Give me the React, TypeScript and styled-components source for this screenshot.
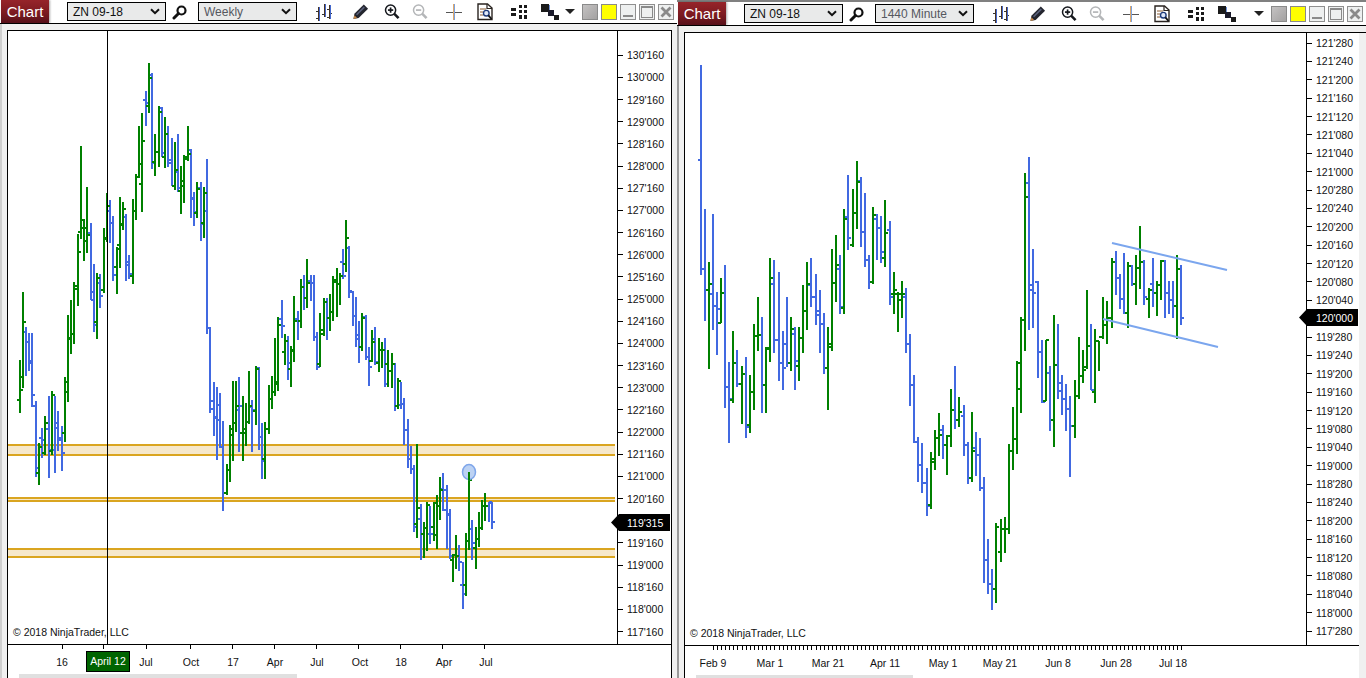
import styled, { createGlobalStyle } from 'styled-components';

// x, top, bottom, open tick, close tick, up? (read off the reference zoom crops)
type Bar = [number, number, number, number, number, number];

const G = 1;
const B = 0;

const LEFT_A: Bar[] = [
  [30, 915, 1073, 1034, 1004, G], [39, 711, 998, 965, 800, G], [48, 816, 962, 830, 860, B], [57, 834, 947, 860, 917, B],
  [66, 834, 1055, 925, 1019, B], [78, 1038, 1265, 1052, 1238, B], [87, 1164, 1289, 1253, 1175, G], [96, 1119, 1208, 1148, 1154, B],
  [105, 1083, 1199, 1193, 1103, G], [117, 1023, 1268, 1121, 1184, B], [126, 1008, 1199, 1187, 1019, G], [135, 1023, 1253, 1184, 1118, B],
  [144, 1068, 1187, 1103, 1148, B], [156, 1113, 1247, 1154, 1193, B], [165, 966, 1160, 1133, 980, G], [174, 780, 1040, 1010, 848, G],
  [183, 735, 896, 851, 836, G], [192, 681, 866, 836, 692, G], [204, 537, 752, 701, 590, G], [213, 273, 551, 530, 494, G],
  [222, 492, 617, 520, 518, G], [231, 396, 593, 557, 539, G], [243, 504, 734, 533, 710, B], [252, 627, 830, 736, 809, B],
  [261, 654, 851, 800, 669, G], [270, 657, 758, 684, 722, B], [282, 519, 713, 704, 552, G], [291, 414, 560, 550, 452, G],
  [300, 435, 563, 467, 503, B], [309, 483, 677, 503, 659, B], [321, 576, 716, 635, 582, G], [330, 426, 638, 570, 510, G],
  [339, 441, 524, 506, 461, G], [348, 477, 677, 486, 630, B], [357, 600, 671, 621, 656, B], [369, 432, 686, 662, 467, G],
  [378, 357, 494, 467, 366, G], [387, 213, 370, 365, 326, G], [396, 174, 470, 387, 257, G], [408, 108, 212, 134, 143, B],
  [417, 24, 173, 154, 69, G], [426, 54, 341, 60, 324, B], [435, 237, 362, 320, 290, G], [447, 153, 335, 290, 170, G],
  [456, 156, 305, 158, 293, B], [465, 186, 338, 305, 236, G], [474, 213, 335, 237, 314, B], [486, 249, 394, 323, 392, B],
  [495, 261, 404, 393, 344, G], [504, 237, 410, 352, 398, B], [513, 333, 476, 407, 392, G], [522, 300, 443, 377, 311, G],
  [534, 213, 317, 305, 296, G], [543, 282, 488, 284, 430, B], [552, 411, 512, 433, 470, B], [561, 381, 488, 474, 402, G],
  [573, 381, 557, 398, 506, B], [582, 396, 548, 503, 414, G], [591, 312, 838, 467, 820, B], [600, 816, 1073, 820, 1037, B],
  [612, 981, 1142, 1062, 1088, B], [621, 996, 1214, 1085, 1094, B], [630, 1014, 1178, 1049, 1175, B], [639, 1098, 1367, 1175, 1313, B],
  [651, 1228, 1319, 1313, 1244, G], [660, 1110, 1280, 1244, 1139, G], [669, 978, 1217, 1122, 1103, G], [678, 978, 1130, 1103, 1052, G],
  [687, 966, 1190, 1064, 1052, B],
];

const LEFT_B: Bar[] = [
  [114, 558, 752, 668, 657, G], [123, 579, 707, 668, 636, G], [132, 483, 641, 636, 588, G], [141, 570, 725, 591, 600, B],
  [153, 468, 644, 603, 478, G], [162, 471, 719, 473, 680, B], [171, 639, 806, 680, 752, B], [180, 636, 806, 747, 657, G],
  [192, 525, 671, 657, 567, G], [201, 498, 596, 567, 546, G], [210, 384, 557, 546, 516, G], [219, 321, 542, 522, 345, G],
  [231, 270, 383, 327, 348, B], [240, 372, 464, 425, 392, G], [249, 378, 509, 392, 458, B], [258, 408, 530, 476, 420, G],
  [267, 258, 455, 423, 333, G], [279, 303, 389, 327, 333, B], [288, 207, 353, 333, 231, G], [297, 195, 299, 231, 264, B],
  [306, 147, 293, 264, 219, G], [318, 195, 272, 213, 219, B], [327, 195, 392, 219, 381, B], [336, 366, 479, 380, 470, B],
  [345, 309, 470, 462, 360, G], [357, 264, 377, 372, 276, G], [366, 264, 389, 276, 324, B], [375, 252, 362, 324, 306, G],
  [384, 198, 332, 306, 210, G], [396, 174, 320, 216, 222, G], [405, 189, 284, 222, 198, G], [414, 117, 206, 156, 198, B],
  [423, 30, 185, 162, 84, G], [432, 108, 263, 114, 243, B], [444, 243, 347, 247, 318, B], [453, 261, 410, 318, 375, B],
  [462, 333, 458, 387, 410, B], [471, 309, 422, 410, 324, G], [483, 315, 449, 321, 441, B], [492, 411, 527, 441, 471, B],
  [501, 360, 455, 452, 396, G], [510, 351, 464, 387, 456, B], [522, 384, 485, 459, 420, G], [531, 396, 473, 420, 420, G],
  [540, 384, 530, 420, 522, B], [549, 420, 530, 462, 483, G], [561, 429, 533, 483, 462, G], [570, 459, 602, 462, 588, B],
  [579, 504, 596, 588, 513, G], [588, 516, 596, 585, 582, B], [597, 564, 704, 582, 660, B], [609, 627, 773, 660, 747, B],
  [618, 708, 791, 747, 777, B], [627, 765, 965, 777, 951, B], [636, 702, 983, 942, 894, G], [648, 882, 1049, 927, 972, B],
  [657, 936, 1043, 972, 954, G], [666, 876, 1022, 954, 885, G], [675, 888, 1001, 972, 972, B], [687, 876, 992, 951, 880, G],
];

const LEFT_C: Bar[] = [
  [111, 195, 358, 316, 228, G], [120, 141, 271, 229, 180, G], [129, 129, 244, 178, 240, B], [141, 165, 358, 180, 255, B],
  [150, 237, 388, 252, 378, B], [159, 372, 455, 390, 375, G], [168, 315, 416, 375, 378, G], [177, 345, 424, 378, 396, B],
  [189, 396, 538, 465, 492, B], [198, 309, 497, 465, 333, G], [207, 126, 361, 333, 150, G], [216, 270, 391, 297, 339, B],
  [228, 291, 418, 354, 327, G], [237, 246, 352, 327, 294, G], [246, 210, 299, 294, 228, G], [255, 189, 273, 228, 228, G],
  [267, 216, 276, 228, 216, B], [276, 216, 296, 219, 276, B],
];

const RIGHT: Bar[] = [
  [33, 15, 604, 280, 586, B], [45, 418, 733, 586, 644, B], [57, 567, 867, 644, 627, G], [69, 432, 758, 657, 690, B],
  [81, 650, 828, 690, 697, B], [93, 610, 736, 736, 652, G], [105, 574, 976, 652, 918, B], [117, 848, 1074, 918, 950, B],
  [129, 759, 962, 954, 850, G], [141, 812, 917, 850, 908, B], [156, 857, 1021, 908, 880, G], [168, 832, 1060, 880, 1030, B],
  [180, 882, 1046, 1024, 932, G], [192, 739, 982, 932, 775, G], [204, 664, 817, 775, 770, G], [216, 720, 990, 770, 912, B],
  [228, 804, 990, 912, 808, G], [240, 554, 847, 810, 612, G], [252, 560, 822, 627, 786, B], [267, 594, 901, 786, 850, B],
  [279, 759, 926, 850, 864, B], [291, 664, 860, 795, 850, B], [303, 720, 873, 850, 755, G], [315, 748, 926, 768, 843, B],
  [327, 748, 901, 858, 780, G], [339, 630, 822, 780, 705, G], [351, 566, 758, 705, 627, G], [363, 554, 693, 630, 665, B],
  [378, 599, 744, 665, 716, B], [390, 644, 822, 705, 740, B], [402, 708, 881, 740, 864, B], [414, 748, 982, 864, 796, G],
  [426, 529, 817, 806, 624, G], [438, 490, 679, 624, 575, G], [450, 546, 713, 586, 692, B], [462, 417, 713, 696, 447, G],
  [474, 322, 534, 440, 498, B], [489, 361, 525, 518, 428, G], [501, 283, 475, 428, 342, G], [513, 328, 525, 340, 482, B],
  [525, 372, 579, 482, 562, B], [537, 546, 643, 562, 622, B], [549, 412, 629, 622, 434, G], [561, 432, 560, 447, 470, B],
  [573, 437, 570, 470, 537, B], [585, 392, 579, 556, 484, G], [600, 451, 688, 478, 665, B], [612, 594, 713, 657, 645, G],
  [624, 650, 763, 657, 657, G], [636, 620, 724, 672, 657, G], [648, 638, 822, 665, 797, B], [660, 767, 971, 797, 912, B],
  [672, 882, 1074, 912, 1070, B], [684, 1056, 1184, 1070, 1136, B], [696, 1075, 1214, 1136, 1186, B], [711, 1145, 1279, 1186, 1250, B],
  [723, 1100, 1259, 1247, 1118, G], [735, 1036, 1150, 1128, 1060, G], [747, 991, 1111, 1060, 1052, G], [759, 1022, 1119, 1036, 1078, B],
  [771, 1050, 1164, 1078, 1054, G], [783, 921, 1085, 1054, 980, G], [795, 857, 1035, 980, 1008, B], [807, 946, 1028, 1008, 988, G],
  [822, 966, 1111, 998, 1080, B], [834, 1070, 1189, 1080, 1172, B], [846, 986, 1183, 1172, 1095, G], [858, 1042, 1167, 1088, 1108, B],
  [870, 1060, 1209, 1108, 1200, B], [882, 1170, 1466, 1200, 1402, B], [894, 1344, 1497, 1402, 1470, B], [906, 1428, 1542, 1470, 1484, B],
  [918, 1299, 1522, 1484, 1310, G], [933, 1288, 1407, 1380, 1314, G], [945, 1280, 1382, 1314, 1314, G], [957, 1076, 1329, 1314, 1097, G],
  [969, 972, 1150, 1097, 1063, G], [981, 844, 1105, 1063, 850, G], [993, 720, 990, 923, 730, G], [1005, 316, 817, 730, 383, G],
  [1017, 272, 758, 344, 632, B], [1029, 530, 752, 645, 652, B], [1044, 620, 892, 622, 818, B], [1056, 784, 962, 818, 960, B],
  [1068, 784, 957, 955, 785, G], [1080, 857, 1041, 878, 1010, B], [1092, 714, 1085, 1010, 855, G], [1104, 739, 951, 855, 905, B],
  [1116, 882, 996, 928, 950, B], [1128, 907, 1041, 950, 978, B], [1140, 941, 1169, 978, 1025, B], [1155, 896, 1060, 1025, 943, G],
  [1167, 778, 951, 943, 885, G], [1179, 812, 906, 885, 870, G], [1191, 644, 867, 860, 802, G], [1203, 739, 926, 802, 924, B],
  [1215, 753, 962, 930, 787, G], [1227, 787, 873, 787, 778, G], [1239, 664, 783, 778, 742, G], [1251, 675, 797, 742, 722, G],
  [1266, 555, 752, 722, 565, G], [1278, 535, 660, 565, 610, B], [1290, 599, 699, 610, 671, B], [1302, 540, 713, 671, 708, B],
  [1314, 566, 752, 708, 577, G], [1326, 575, 634, 577, 627, B], [1338, 546, 688, 627, 582, G], [1350, 465, 643, 582, 567, G],
  [1362, 560, 688, 567, 665, B], [1377, 640, 724, 671, 645, G], [1389, 555, 693, 627, 652, B], [1401, 620, 719, 652, 632, G],
  [1413, 561, 673, 632, 563, G], [1425, 561, 724, 563, 652, B], [1437, 620, 713, 652, 673, B], [1449, 620, 724, 673, 690, B],
  [1461, 547, 783, 690, 587, G], [1473, 575, 744, 585, 722, B],
];

// zoom crop coordinates back to page pixels
const place = (bars: Bar[], ox: number, oy: number, sy = 1 / 3): Bar[] =>
  bars.map(([x, t, b, o, c, up]) => [ox + x / 3, oy + t * sy, oy + b * sy, oy + o * sy, oy + c * sy, up]);

const leftBars = [...place(LEFT_A, 10, 55), ...place(LEFT_B, 205, 210), ...place(LEFT_C, 400, 430)];
// the tall right crop came back squashed, so its y scale differs
const rightBars = place(RIGHT, 690, 60, 550 / 1542);

const leftPrices: string[] = [];
for (let whole = 130; whole >= 117; whole--) {
  if (whole < 130) leftPrices.push(`${whole + 1}'000`);
  leftPrices.push(`${whole}'160`);
}
leftPrices.unshift("130'320");

const rightPrices: string[] = [];
for (let whole = 121; whole >= 118; whole--) {
  ['280', '240', '200', '160', '120', '080', '040', '000'].forEach((frac) => rightPrices.push(`${whole}'${frac}`));
}
rightPrices.push("117'280");

const GlobalStyle = createGlobalStyle`
  html, body {
    margin: 0;
    padding: 0;
    background: #f0f0f0;
    overflow: hidden;
  }
  body {
    font-family: "Liberation Sans", Arial, sans-serif;
  }
`;

const Page = styled.div`
  display: flex;
  width: 1366px;
  height: 678px;
  overflow: hidden;
`;

const Window = styled.div<{ $width: number; $topBar?: boolean }>`
  display: flex;
  flex-direction: column;
  flex: none;
  width: ${(p) => p.$width}px;
  height: 678px;
  ${(p) => p.$topBar && 'border-top: 2px solid #808080;'}
  box-sizing: border-box;
`;

const Toolbar = styled.div`
  display: flex;
  align-items: center;
  flex: none;
  height: 23px;
  padding: 0 3px 0 1px;
  background: #fff;
  border-bottom: 1px solid #000;
`;

const ChartTab = styled.div`
  flex: none;
  width: 48px;
  height: 23px;
  line-height: 23px;
  text-align: center;
  color: #fff;
  font-size: 15px;
  background: linear-gradient(180deg, #96242a 0%, #7c1a20 55%, #57101a 100%);
  box-shadow: 1px 0 2px rgba(0, 0, 0, 0.35);
`;

const Picker = styled.div<{ $muted?: boolean; $ml: number }>`
  display: flex;
  align-items: center;
  justify-content: space-between;
  flex: none;
  box-sizing: border-box;
  width: 99px;
  height: 19px;
  margin-left: ${(p) => p.$ml}px;
  padding: 0 5px;
  border: 1px solid #000;
  background: #e9eaea;
  font-size: 12px;
  color: ${(p) => (p.$muted ? '#55585f' : '#111')};
`;

const ToolSlot = styled.div<{ $ml: number; $w?: number }>`
  display: flex;
  align-items: center;
  justify-content: center;
  flex: none;
  width: ${(p) => p.$w ?? 16}px;
  height: 20px;
  margin-left: ${(p) => p.$ml}px;
`;

const WindowTools = styled.div`
  display: flex;
  align-items: center;
  gap: 3px;
  margin-left: auto;
`;

const DropCaret = styled.div`
  width: 0;
  height: 0;
  margin-right: 4px;
  border-left: 5px solid transparent;
  border-right: 5px solid transparent;
  border-top: 5px solid #222;
`;

const Swatch = styled.div<{ $kind: 'gray' | 'yellow' }>`
  box-sizing: border-box;
  width: 16px;
  height: 16px;
  border: 1px solid #8a8a8a;
  background: ${(p) => (p.$kind === 'yellow' ? '#ffff00' : 'linear-gradient(135deg, #c4c2c2, #a3a1a1)')};
`;

const WindowButton = styled.div`
  display: flex;
  align-items: center;
  justify-content: center;
  box-sizing: border-box;
  width: 16px;
  height: 16px;
  border: 1px solid #8f8f8f;
  background: #eef0f0;
`;

const Body = styled.div<{ $edge: string; $flush?: boolean }>`
  flex: 1;
  display: flex;
  min-height: 0;
  box-sizing: border-box;
  padding: 6px ${(p) => (p.$flush ? 0 : 5)}px 0 5px;
  background: #f0f0f0;
  border-left: 2px solid ${(p) => p.$edge};
`;

// $open: no right edge, the top rule runs on to the window edge over a grey strip
const Frame = styled.div<{ $open?: boolean }>`
  flex: 1;
  display: flex;
  flex-direction: column;
  min-width: 0;
  box-sizing: border-box;
  background: #fff;
  border: 1px solid #000;
  border-bottom: none;
  ${(p) => p.$open && 'border-right: none; padding-right: 7px; background-clip: content-box;'}
`;

const PlotRow = styled.div<{ $height: number }>`
  display: flex;
  flex: none;
  height: ${(p) => p.$height}px;
`;

const Plot = styled.div<{ $width: number }>`
  position: relative;
  flex: none;
  width: ${(p) => p.$width}px;
  height: 100%;
`;

const Copyright = styled.span`
  position: absolute;
  left: 5px;
  bottom: 6px;
  font-size: 10.5px;
  color: #111;
  white-space: nowrap;
`;

const PriceAxis = styled.div<{ $top: number; $bottom: number }>`
  position: relative;
  flex: 1;
  display: flex;
  flex-direction: column;
  justify-content: space-between;
  box-sizing: border-box;
  padding: ${(p) => p.$top}px 0 ${(p) => p.$bottom}px;
  border-left: 1px solid #000;
`;

const PriceRow = styled.div<{ $hidden?: boolean }>`
  display: flex;
  align-items: center;
  height: 0;
  font-size: 10.5px;
  color: #111;
  white-space: nowrap;

  &::before {
    content: '';
    flex: none;
    width: 5px;
    height: 1px;
    margin-right: 4px;
    background: #000;
    visibility: ${(p) => (p.$hidden ? 'hidden' : 'visible')};
  }

  span {
    visibility: ${(p) => (p.$hidden ? 'hidden' : 'visible')};
  }
`;

const LastPrice = styled.div<{ $top: number; $left: number }>`
  position: absolute;
  top: ${(p) => p.$top}px;
  left: ${(p) => p.$left}px;
  display: flex;
  align-items: center;
  box-sizing: border-box;
  width: 59px;
  height: 17px;
  padding-left: ${(p) => 9 - p.$left}px;
  background: #000;
  color: #fff;
  font-size: 10.5px;
  clip-path: polygon(0 50%, 8px 0, 100% 0, 100% 100%, 8px 100%);
`;

const TimeAxis = styled.div`
  position: relative;
  flex: none;
  height: 29px;
  border-top: 1px solid #000;
`;

const TimeLabel = styled.span<{ $x: number }>`
  position: absolute;
  top: 11px;
  left: ${(p) => p.$x}px;
  transform: translateX(-50%);
  font-size: 10.5px;
  color: #111;
  white-space: nowrap;
`;

const TimeCursor = styled.span<{ $x: number }>`
  position: absolute;
  top: 6px;
  left: ${(p) => p.$x}px;
  box-sizing: border-box;
  width: 44px;
  height: 21px;
  line-height: 19px;
  text-align: center;
  font-size: 10.5px;
  color: #fff;
  background: #006400;
  border: 1px solid #000;
  white-space: nowrap;
`;

const Scrollbar = styled.div`
  flex: none;
  height: 4px;
  background: #fff;
`;

const ScrollThumb = styled.div`
  width: 217px;
  height: 100%;
  margin-left: 11px;
  background: #e0e0e0;
`;

const WideThumb = styled(ScrollThumb)`
  width: 278px;
`;

const ChartSvg = styled.svg`
  display: block;
`;

const TickSvg = styled.svg`
  display: block;
  position: absolute;
  top: 0;
  left: 0;
`;

const stems = (bars: Bar[], up: number) =>
  bars.filter((b) => b[5] === up).map((b) => `M${b[0]} ${b[1]}V${b[2]}`).join('');

const ticks = (bars: Bar[], up: number) =>
  bars
    .filter((b) => b[5] === up)
    .map((b) => `M${b[0] - 3} ${b[3]}H${b[0]}M${b[0]} ${b[4]}H${b[0] + 3}`)
    .join('');

const BarSeries = ({ bars }: { bars: Bar[] }) => (
  <g shapeRendering="crispEdges" fill="none">
    <path d={stems(bars, B)} stroke="#4169e1" strokeWidth={2} />
    <path d={ticks(bars, B)} stroke="#4169e1" strokeWidth={2} />
    <path d={stems(bars, G)} stroke="#008000" strokeWidth={2} />
    <path d={ticks(bars, G)} stroke="#008000" strokeWidth={2} />
  </g>
);

const Zone = ({ top, bottom, x, width }: { top: number; bottom: number; x: number; width: number }) => (
  <g>
    <rect x={x} y={top} width={width} height={bottom - top} fill="#f6e8cb" />
    <rect x={x} y={top - 1} width={width} height={2} fill="#daa520" />
    <rect x={x} y={bottom - 1} width={width} height={2} fill="#daa520" />
  </g>
);

const SearchIcon = () => (
  <svg width="16" height="16" viewBox="0 0 16 16" fill="none">
    <circle cx="9.5" cy="6.5" r="4" stroke="#111" strokeWidth="2.2" />
    <path d="M6.5 9.5 2 14" stroke="#111" strokeWidth="3" strokeLinecap="round" />
  </svg>
);

const Chevron = () => (
  <svg width="10" height="7" viewBox="0 0 10 7" fill="none">
    <path d="M1 1.2 5 5.2 9 1.2" stroke="#111" strokeWidth="2" />
  </svg>
);

const BarsIcon = () => (
  <svg width="16" height="18" viewBox="0 0 16 18" fill="none" shapeRendering="crispEdges">
    <path d="M2.5 4V18M8.5 1V14M13.5 2V16" stroke="#4a3422" strokeWidth="1" />
    <path d="M3.5 4V18M9.5 1V14M14.5 2V16" stroke="#4468cc" strokeWidth="1" />
    <path d="M0 8H2M0 15H2M6 11H8M11 6H13M15 10H16M11 14H13" stroke="#333" strokeWidth="1" />
  </svg>
);

const PencilIcon = () => (
  <svg width="17" height="17" viewBox="0 0 17 17">
    <path d="M0.5 16.5 1.5 11 11.5 1 16 5.5 6 15.5Z" fill="#23252e" />
    <path d="M3.2 11.4 11.4 3.2 12.6 4.4 4.4 12.6Z" fill="#59607a" />
    <path d="M0.5 16.5 1.5 12.6 4.4 15.5Z" fill="#c98a4a" />
  </svg>
);

const ZoomIcon = ({ color, plus }: { color: string; plus?: boolean }) => (
  <svg width="17" height="17" viewBox="0 0 17 17" fill="none">
    <circle cx="7" cy="7" r="5.4" stroke={color} strokeWidth="1.6" />
    <path d="M4.2 7H9.8" stroke={color} strokeWidth="1.8" />
    {plus && <path d="M7 4.2V9.8" stroke={color} strokeWidth="1.8" />}
    <path d="M11 11 15.5 15.5" stroke={color} strokeWidth="2.8" />
  </svg>
);

const CrossIcon = () => (
  <svg width="16" height="16" viewBox="0 0 16 16" shapeRendering="crispEdges">
    <rect x="0" y="8" width="16" height="1" fill="#555" />
    <rect x="7" y="0" width="1" height="16" fill="#e0a868" />
    <rect x="8" y="0" width="1" height="16" fill="#7aa2e0" />
  </svg>
);

const ReportIcon = () => (
  <svg width="16" height="18" viewBox="0 0 16 18" fill="none">
    <path d="M1 1H10.5L15 5V16.5H1Z" stroke="#2a2420" strokeWidth="1.4" fill="#fff" />
    <path d="M10 1V5.5H15" stroke="#2a2420" strokeWidth="1.2" />
    <path d="M3 6H9M3 9H6M3 12H6" stroke="#8a5a30" strokeWidth="1" />
    <circle cx="9.3" cy="10.2" r="2.8" stroke="#1d3a7a" strokeWidth="1.4" fill="#dfe8f8" />
    <path d="M11.4 12.3 14.5 16" stroke="#111" strokeWidth="1.8" />
  </svg>
);

const ColumnsIcon = () => (
  <svg width="16" height="14" viewBox="0 0 16 14" shapeRendering="crispEdges">
    <path d="M0 3H5V6H0ZM0 8H5V11H0Z" fill="#1a1a1a" />
    <path d="M8 0H11V3H8ZM13 0H16V3H13ZM8 5H11V8H8ZM13 5H16V8H13ZM8 10H11V14H8ZM13 10H16V14H13Z" fill="#1a1a1a" />
  </svg>
);

const StackIcon = () => (
  <svg width="18" height="16" viewBox="0 0 18 16" shapeRendering="crispEdges">
    <rect x="0" y="0" width="8" height="8" fill="#1a1a1a" />
    <rect x="7" y="6" width="6" height="6" fill="#1a1a2a" />
    <rect x="13" y="11" width="5" height="5" fill="#1a1a1a" />
    <rect x="8" y="1" width="1" height="5" fill="#6f92d8" />
  </svg>
);

const MinimizeIcon = () => (
  <svg width="14" height="14" viewBox="0 0 14 14">
    <rect x="2" y="10" width="10" height="2" fill="#8a8a8a" />
  </svg>
);

const MaximizeIcon = () => (
  <svg width="14" height="14" viewBox="0 0 14 14" fill="none">
    <rect x="1.5" y="1.5" width="11" height="11" stroke="#8a8a8a" />
    <rect x="1" y="1" width="12" height="2" fill="#8a8a8a" />
  </svg>
);

const CloseIcon = () => (
  <svg width="14" height="14" viewBox="0 0 14 14">
    <path d="M2.5 2.5 11.5 11.5M11.5 2.5 2.5 11.5" stroke="#8a8a8a" strokeWidth="2.8" />
  </svg>
);

interface ChartToolbarProps {
  period: string;
}

const ChartToolbar = ({ period }: ChartToolbarProps) => (
  <Toolbar>
    <ChartTab>Chart</ChartTab>
    <Picker $ml={18}>
      ZN 09-18
      <Chevron />
    </Picker>
    <ToolSlot $ml={6}>
      <SearchIcon />
    </ToolSlot>
    <Picker $muted $ml={10}>
      {period}
      <Chevron />
    </Picker>
    <ToolSlot $ml={19}>
      <BarsIcon />
    </ToolSlot>
    <ToolSlot $ml={21}>
      <PencilIcon />
    </ToolSlot>
    <ToolSlot $ml={15}>
      <ZoomIcon color="#14171c" plus />
    </ToolSlot>
    <ToolSlot $ml={12}>
      <ZoomIcon color="#b4b6b8" />
    </ToolSlot>
    <ToolSlot $ml={18}>
      <CrossIcon />
    </ToolSlot>
    <ToolSlot $ml={15}>
      <ReportIcon />
    </ToolSlot>
    <ToolSlot $ml={18}>
      <ColumnsIcon />
    </ToolSlot>
    <ToolSlot $ml={14} $w={18}>
      <StackIcon />
    </ToolSlot>
    <WindowTools>
      <DropCaret />
      <Swatch $kind="gray" />
      <Swatch $kind="yellow" />
      <WindowButton>
        <MinimizeIcon />
      </WindowButton>
      <WindowButton>
        <MaximizeIcon />
      </WindowButton>
      <WindowButton>
        <CloseIcon />
      </WindowButton>
    </WindowTools>
  </Toolbar>
);

const leftTimes: [string, number][] = [
  ['16', 54], ['Jul', 138], ['Oct', 183], ['17', 225], ['Apr', 267], ['Jul', 309], ['Oct', 352], ['18', 393], ['Apr', 436], ['Jul', 478],
];
const leftTicks = [54, 95, 138, 182, 224, 266, 308, 350, 392, 434, 476];

const rightTimes: [string, number][] = [
  ['Feb 9', 28], ['Mar 1', 85], ['Mar 21', 143], ['Apr 11', 200], ['May 1', 258], ['May 21', 315], ['Jun 8', 373], ['Jun 28', 431], ['Jul 18', 488],
];

const LeftChart = () => (
  <Window $width={677}>
    <ChartToolbar period="Weekly" />
    <Body $edge="#cfcfcf">
      <Frame>
        <PlotRow $height={613}>
          <Plot $width={609}>
            <ChartSvg width={609} height={613} viewBox="8 31 609 613">
              <Zone x={8} width={607} top={445} bottom={455} />
              <Zone x={8} width={607} top={498} bottom={501} />
              <Zone x={8} width={607} top={549} bottom={557} />
              <BarSeries bars={leftBars} />
              <ellipse cx={469} cy={472} rx={6.5} ry={7.5} fill="#bcd2f3" stroke="#7fa6ea" strokeWidth={1.5} />
              <path d="M469 472V480" stroke="#008000" strokeWidth={2} />
              <rect x={107} y={31} width={1} height={613} fill="#000" />
            </ChartSvg>
            <Copyright>© 2018 NinjaTrader, LLC</Copyright>
          </Plot>
          <PriceAxis $top={2} $bottom={12}>
            {leftPrices.map((price) => (
              <PriceRow key={price} $hidden={price === "130'320" || price === "120'000"}>
                <span>{price}</span>
              </PriceRow>
            ))}
            <LastPrice $top={483} $left={-7}>119'315</LastPrice>
          </PriceAxis>
        </PlotRow>
        <TimeAxis>
          <TickSvg width={520} height={5} shapeRendering="crispEdges">
            {leftTicks.map((x) => (
              <rect key={x} x={x} y={0} width={1} height={4} fill="#000" />
            ))}
          </TickSvg>
          {leftTimes.map(([label, x]) => (
            <TimeLabel key={`${label}${x}`} $x={x}>
              {label}
            </TimeLabel>
          ))}
          <TimeCursor $x={78}>April 12</TimeCursor>
        </TimeAxis>
        <Scrollbar>
          <WideThumb />
        </Scrollbar>
      </Frame>
    </Body>
  </Window>
);

const RightChart = () => (
  <Window $width={689} $topBar>
    <ChartToolbar period="1440 Minute" />
    <Body $edge="#9a9a9a" $flush>
      <Frame $open>
        <PlotRow $height={612}>
          <Plot $width={621}>
            <ChartSvg width={621} height={612} viewBox="685 33 621 612">
              <BarSeries bars={rightBars} />
              <path d="M1112 243 1227 270M1103 319 1218 347" stroke="#7ba6ee" strokeWidth={2} fill="none" />
            </ChartSvg>
            <Copyright>© 2018 NinjaTrader, LLC</Copyright>
          </Plot>
          <PriceAxis $top={10} $bottom={14}>
            {rightPrices.map((price) => (
              <PriceRow key={price} $hidden={price === "120'000"}>
                <span>{price}</span>
              </PriceRow>
            ))}
            <LastPrice $top={276} $left={-8}>120'000</LastPrice>
          </PriceAxis>
        </PlotRow>
        <TimeAxis>
          <TickSvg width={621} height={5} shapeRendering="crispEdges">
            {rightBars
              .filter((b) => b[0] >= 712)
              .map((b) => (
                <rect key={b[0]} x={Math.round(b[0]) - 685} y={0} width={1} height={4} fill="#000" />
              ))}
          </TickSvg>
          {rightTimes.map(([label, x]) => (
            <TimeLabel key={label} $x={x}>
              {label}
            </TimeLabel>
          ))}
        </TimeAxis>
        <Scrollbar>
          <ScrollThumb />
        </Scrollbar>
      </Frame>
    </Body>
  </Window>
);

const App = () => (
  <Page>
    <GlobalStyle />
    <LeftChart />
    <RightChart />
  </Page>
);

export default App;
